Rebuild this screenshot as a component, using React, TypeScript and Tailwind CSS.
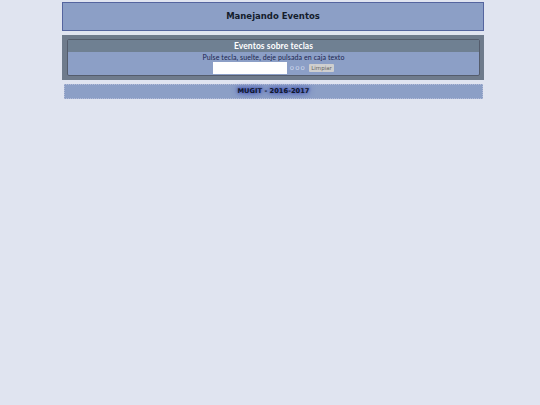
export default function App() {
  return (
    <div className="min-h-[405px] bg-[#e0e4f0] pt-[2px] pl-[62px] font-['DejaVu_Sans',sans-serif]">
      <div className="w-[422px] flex flex-col">
        <div className="h-[29px] flex items-center justify-center bg-[#8c9fc6] border border-[#55659f] text-[8.5px] font-bold text-[#141c2c]">
          Manejando Eventos
        </div>
        <div className="mt-[4px] h-[45px] bg-[#6f7b8c] pt-[4px] pl-[5px] pr-[4px] pb-[4px]">
          <div className="h-full border border-[#545c6c] bg-[#8c9fc6] flex flex-col items-center rounded-[2px]">
            <div className="w-full h-[12px] bg-[#6f8092] text-white text-[8.5px] font-bold leading-[12px] text-center font-['Lato',sans-serif] tracking-[0.1px]">
              Eventos sobre teclas
            </div>
            <div className="text-[7px] leading-[10px] text-[#1a2550] font-['Lato',sans-serif] tracking-[0.1px]">
              Pulse tecla, suelte, deje pulsada en caja texto
            </div>
            <div className="flex items-center h-[12px]">
              <div className="w-[74px] h-[12px] bg-white" />
              <span className="ml-[3px] w-[18px] whitespace-nowrap text-[6.5px] leading-[12px] text-[#d5dcf0] font-['Lato',sans-serif]">0 0 0</span>
              <div className="ml-[1px] w-[25px] h-[8px] bg-[#cfcfcf] text-[5.5px] leading-[8px] text-center text-[#666] rounded-[1px]">
                Limpiar
              </div>
            </div>
          </div>
        </div>
        <div className="mt-[4px] ml-[2px] w-[419px] h-[15px] bg-[#8c9fc6] border border-dotted border-[#b4bcd8] flex items-center justify-center text-[6.7px] font-bold text-[#10182a] [text-shadow:0_0_6px_#2a38b0,0_0_3px_#2a38b0]">
          MUGIT - 2016-2017
        </div>
      </div>
    </div>
  );
}
